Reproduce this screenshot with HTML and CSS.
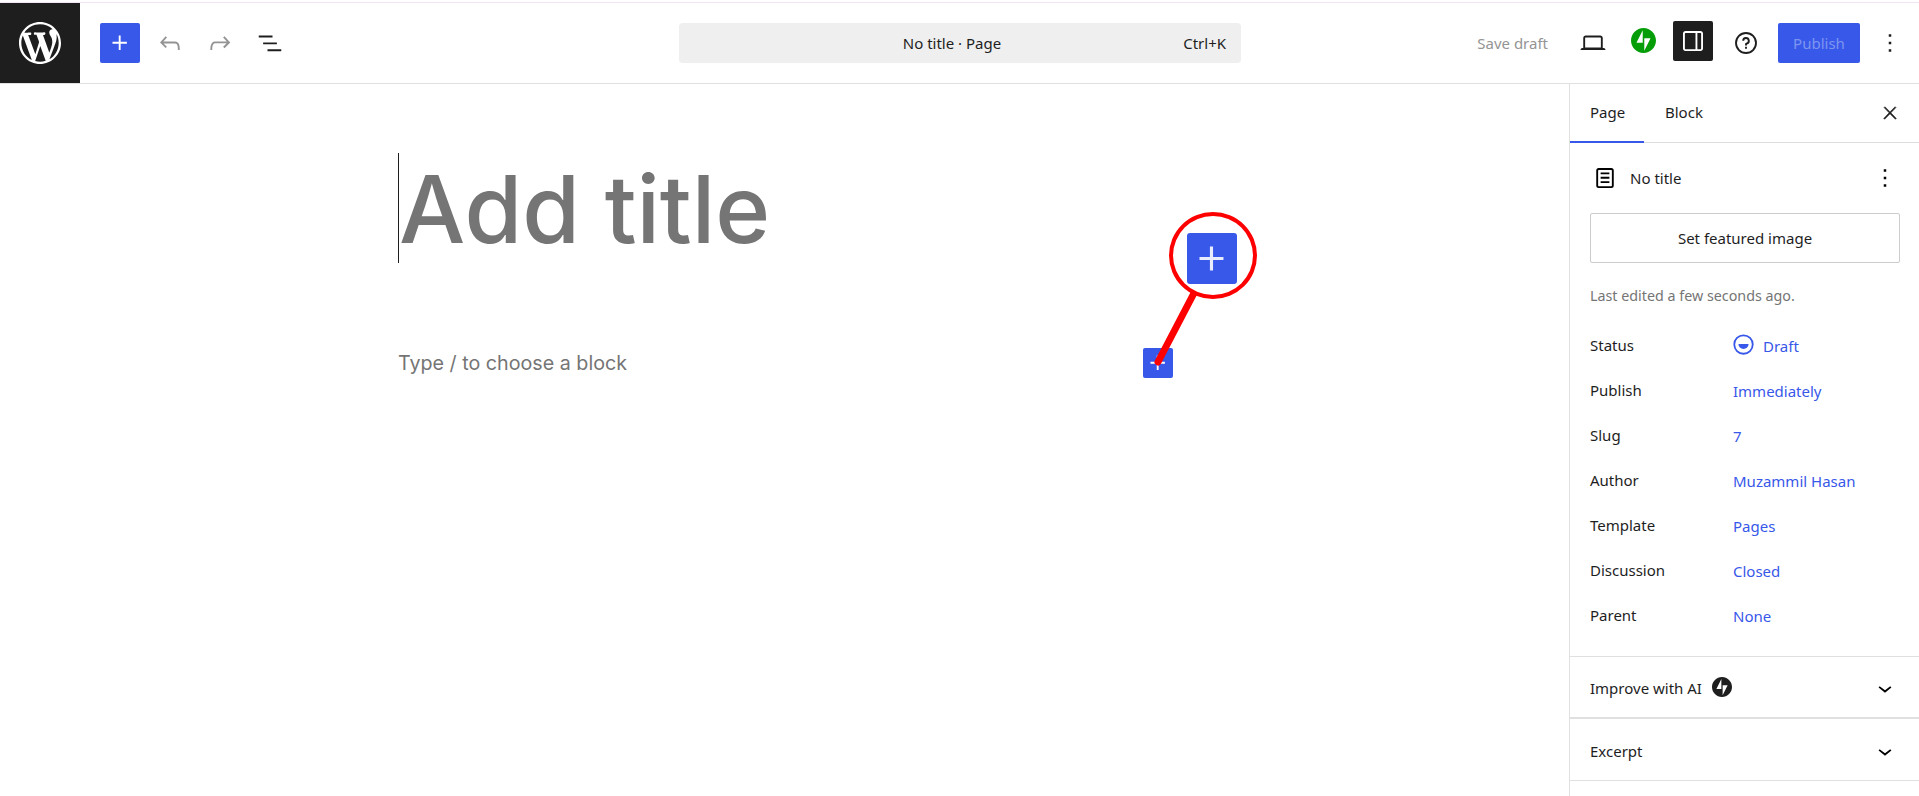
FILE: index.html
```html
<!DOCTYPE html>
<html lang="en">
<head>
    <meta charset="UTF-8">
    <title>Add New Page</title>
    <link rel="stylesheet" href="styles.css">
</head>
<body>
    <header class="topbar">
        <a class="wp-logo">
            <svg viewBox="0 0 20 20" width="42" height="42" fill="#fff"><path d="M20 10c0-5.51-4.49-10-10-10C4.48 0 0 4.49 0 10c0 5.52 4.48 10 10 10 5.51 0 10-4.48 10-10zM7.78 15.37L4.37 6.22c.55-.02 1.17-.08 1.17-.08.5-.06.44-1.13-.06-1.11 0 0-1.45.11-2.37.11-.18 0-.37 0-.58-.01C4.12 2.69 6.87 1.11 10 1.11c2.33 0 4.45.87 6.05 2.34-.68-.11-1.65.39-1.65 1.58 0 .74.45 1.36.9 2.1.35.61.55 1.36.55 2.46 0 1.49-1.4 5-1.4 5l-3.03-8.37c.54-.02.82-.17.82-.17.5-.05.44-1.25-.06-1.22 0 0-1.44.12-2.38.12-.87 0-2.33-.12-2.33-.12-.5-.03-.56 1.2-.06 1.22l.92.08 1.26 3.41zM17.41 10c.24-.64.74-1.87.43-4.25.7 1.29 1.05 2.71 1.05 4.25 0 3.29-1.73 6.24-4.4 7.78.97-2.59 1.94-5.2 2.92-7.78zM6.1 18.09C3.12 16.65 1.11 13.53 1.11 10c0-1.3.23-2.48.72-3.59C3.25 10.3 4.67 14.2 6.1 18.09zm4.03-6.63l2.58 6.98c-.86.29-1.76.45-2.71.45-.79 0-1.57-.11-2.29-.33.81-2.38 1.62-4.74 2.42-7.1z"/></svg>
        </a>
        <div class="tools-left">
            <button class="icon-btn primary">
                <svg viewBox="0 0 24 24" width="30" height="30" fill="#fff"><path d="M11 12.5V17.5H12.5V12.5H17.5V11H12.5V6H11V11H6V12.5H11Z"/></svg>
            </button>
            <button class="icon-btn muted">
                <svg viewBox="0 0 24 24" width="30" height="30"><path d="M18.3 11.7c-.6-.6-1.4-.9-2.3-.9H6.7l2.9-3.3-1.1-1-4.5 5L8.5 16l1-1-2.7-2.7H16c.5 0 .9.2 1.3.5 1 1 1 3.4 1 4.5v.3h1.5v-.2c0-1.5 0-4.3-1.5-5.7z"/></svg>
            </button>
            <button class="icon-btn muted">
                <svg viewBox="0 0 24 24" width="30" height="30"><path d="M15.6 6.5l-1.1 1 2.9 3.3H8c-.9 0-1.7.3-2.3.9-1.4 1.5-1.4 4.2-1.4 5.6v.2h1.5v-.3c0-1.1 0-3.5 1-4.5.3-.3.7-.5 1.3-.5h9.2L14.5 15l1.1 1.1 4.6-4.6-4.6-5z"/></svg>
            </button>
            <button class="icon-btn">
                <svg viewBox="0 0 24 24" width="30" height="30"><path d="M3 6h11v1.5H3V6zm3.5 5.5h11V13h-11v-1.5zM21 17H10v1.5h11V17z"/></svg>
            </button>
        </div>
        <div class="command-bar">
            <span class="command-title">No title · Page</span>
            <span class="command-key">Ctrl+K</span>
        </div>
        <div class="tools-right">
            <span class="save-draft">Save draft</span>
            <button class="icon-btn">
                <svg viewBox="0 0 24 24" width="30" height="30"><path d="M20.5 16h-.7V8c0-1.1-.9-2-2-2H6.2c-1.1 0-2 .9-2 2v8h-.7c-.8 0-1.5.7-1.5 1.5h20c0-.8-.7-1.5-1.5-1.5zM5.7 8c0-.3.2-.5.5-.5h11.6c.3 0 .5.2.5.5v7.6H5.7V8z"/></svg>
            </button>
            <button class="icon-btn jetpack">
                <svg viewBox="0 0 32 32" width="25" height="25" fill="#069e08"><path d="M16,0C7.2,0,0,7.2,0,16s7.2,16,16,16s16-7.2,16-16S24.8,0,16,0z M15,19H7l8-16V19z M17,29V13h8L17,29z"/></svg>
            </button>
            <button class="icon-btn dark">
                <svg viewBox="0 0 24 24" width="30" height="30" fill="#fff"><path d="M18 4H6c-1.1 0-2 .9-2 2v12c0 1.1.9 2 2 2h12c1.1 0 2-.9 2-2V6c0-1.1-.9-2-2-2zm-4 14.5H6c-.3 0-.5-.2-.5-.5V6c0-.3.2-.5.5-.5h8v13zm4.5-.5c0 .3-.2.5-.5.5h-2.5v-13H18c.3 0 .5.2.5.5v12z"/></svg>
            </button>
            <button class="icon-btn help">
                <svg viewBox="0 0 24 24" width="30" height="30"><path d="M12 4.75a7.25 7.25 0 100 14.5 7.25 7.25 0 000-14.5zM3.25 12a8.75 8.75 0 1117.5 0 8.75 8.75 0 01-17.5 0zM12 8.75a1.5 1.5 0 01.167 2.99c-.465.052-.917.44-.917 1.01V14h1.5v-.845A3 3 0 109 10.25h1.5a1.5 1.5 0 011.5-1.5zM11.25 15v1.5h1.5V15h-1.5z"/></svg>
            </button>
            <button class="publish">Publish</button>
            <button class="icon-btn">
                <svg viewBox="0 0 24 24" width="30" height="30"><path d="M13 19h-2v-2h2v2zm0-6h-2v-2h2v2zm0-6h-2V5h2v2z"/></svg>
            </button>
        </div>
    </header>

    <div class="workspace">
        <main class="editor">
            <div class="editor-canvas">
                <h1 class="title-placeholder">Add title</h1>
                <div class="block-row">
                    <p class="block-placeholder">Type / to choose a block</p>
                    <button class="inserter">
                        <svg viewBox="0 0 24 24" width="30" height="30" fill="#fff"><path d="M11 12.5V17.5H12.5V12.5H17.5V11H12.5V6H11V11H6V12.5H11Z"/></svg>
                    </button>
                </div>
            </div>

            <!-- callout drawn on top of the screenshot -->
            <svg class="callout-line" width="60" height="90" viewBox="0 0 60 90">
                <path d="M45 3 L10 70" stroke="#fe0000" stroke-width="7" stroke-linecap="round" fill="none"/>
            </svg>
            <div class="callout-ring">
                <div class="callout-btn">
                    <svg viewBox="0 0 24 24" width="52" height="52" fill="#e9ecfd"><path d="M11 12.5V17.5H12.5V12.5H17.5V11H12.5V6H11V11H6V12.5H11Z"/></svg>
                </div>
            </div>
        </main>

        <aside class="sidebar">
            <div class="tabs">
                <span class="tab active">Page</span>
                <span class="tab">Block</span>
                <button class="icon-btn close">
                    <svg viewBox="0 0 24 24" width="20" height="20" stroke="#1e1e1e" stroke-width=".7"><path d="M13 11.8l6.1-6.3-1-1-6.1 6.2-6.1-6.2-1 1 6.1 6.3-6.5 6.7 1 1 6.5-6.6 6.5 6.6 1-1z"/></svg>
                </button>
            </div>

            <section class="summary">
                <div class="doc-row">
                    <svg viewBox="0 0 24 24" width="30" height="30"><path fill-rule="evenodd" d="M17 4H7a2 2 0 0 0-2 2v12a2 2 0 0 0 2 2h10a2 2 0 0 0 2-2V6a2 2 0 0 0-2-2Zm0 1.5H7a.5.5 0 0 0-.5.5v12a.5.5 0 0 0 .5.5h10a.5.5 0 0 0 .5-.5V6a.5.5 0 0 0-.5-.5ZM15.5 7.5h-7V9h7V7.5Zm-7 3.5h7v1.5h-7V11Zm7 3.5h-7V16h7v-1.5Z"/></svg>
                    <span class="doc-name">No title</span>
                    <svg viewBox="0 0 24 24" width="30" height="30"><path d="M13 19h-2v-2h2v2zm0-6h-2v-2h2v2zm0-6h-2V5h2v2z"/></svg>
                </div>
                <button class="featured-btn">Set featured image</button>
                <p class="last-edited">Last edited a few seconds ago.</p>

                <div class="meta">
                    <div class="meta-row">
                        <span class="meta-label">Status</span>
                        <span class="meta-value">
                            <svg class="status-icon" viewBox="0 0 24 24" width="27" height="27" fill="#3858e9"><path fill-rule="evenodd" d="M12 3a9 9 0 1 0 0 18 9 9 0 0 0 0-18Zm0 1.6a7.4 7.4 0 1 1 0 14.8 7.4 7.4 0 0 1 0-14.8ZM7.5 11.5h9a4.5 4.5 0 0 1-9 0Z"/></svg>
                            Draft
                        </span>
                    </div>
                    <div class="meta-row"><span class="meta-label">Publish</span><span class="meta-value">Immediately</span></div>
                    <div class="meta-row"><span class="meta-label">Slug</span><span class="meta-value">7</span></div>
                    <div class="meta-row"><span class="meta-label">Author</span><span class="meta-value">Muzammil Hasan</span></div>
                    <div class="meta-row"><span class="meta-label">Template</span><span class="meta-value">Pages</span></div>
                    <div class="meta-row"><span class="meta-label">Discussion</span><span class="meta-value">Closed</span></div>
                    <div class="meta-row"><span class="meta-label">Parent</span><span class="meta-value">None</span></div>
                </div>
            </section>

            <section class="panel panel-ai">
                <span class="panel-title">Improve with AI</span>
                <svg class="panel-badge" viewBox="0 0 32 32" width="20" height="20" fill="#1e1e1e"><path d="M16,0C7.2,0,0,7.2,0,16s7.2,16,16,16s16-7.2,16-16S24.8,0,16,0z M15,19H7l8-16V19z M17,29V13h8L17,29z"/></svg>
                <svg class="chevron" viewBox="0 0 24 24" width="28" height="28"><path d="M17.5 11.6L12 16l-5.5-4.4.9-1.2L12 14l4.5-3.6 1 1.2z"/></svg>
            </section>
            <section class="panel">
                <span class="panel-title">Excerpt</span>
                <svg class="chevron" viewBox="0 0 24 24" width="28" height="28"><path d="M17.5 11.6L12 16l-5.5-4.4.9-1.2L12 14l4.5-3.6 1 1.2z"/></svg>
            </section>
        </aside>
    </div>
</body>
</html>
```

FILE: styles.css
```css
* {
    box-sizing: border-box;
}

html,
body {
    height: 100%;
}

body {
    margin: 0;
    display: flex;
    flex-direction: column;
    overflow: hidden;
    padding-top: 2px;
    font-family: "Noto Sans", "Open Sans", sans-serif;
    font-size: 15px;
    color: #1e1e1e;
    background-color: #fff;
}

button {
    font-family: inherit;
    font-size: 15px;
    border: none;
    background: none;
    padding: 0;
    color: inherit;
}

svg {
    display: block;
}

/* top bar */
.topbar {
    flex: none;
    height: 82px;
    display: flex;
    align-items: center;
    border-top: 1px solid #f3e5f5;
    border-bottom: 1px solid #e0e0e0;
}

.wp-logo {
    flex: none;
    width: 80px;
    height: 80px;
    background-color: #1e1e1e;
    display: flex;
    justify-content: center;
    align-items: center;
}

.icon-btn {
    flex: none;
    width: 40px;
    height: 40px;
    border-radius: 2px;
    display: flex;
    justify-content: center;
    align-items: center;
    fill: #1e1e1e;
}

.icon-btn.primary {
    background-color: #3858e9;
}

.icon-btn.muted {
    fill: #949494;
}

.icon-btn.dark {
    background-color: #1e1e1e;
    margin-bottom: 4px;
}

.icon-btn.jetpack svg {
    margin-bottom: 5px;
}

.icon-btn.help {
    margin-left: 3px;
}

.tools-left {
    flex: none;
    display: flex;
    align-items: center;
    gap: 10px;
    margin-left: 20px;
    width: 579px;
}

.command-bar {
    flex: none;
    width: 562px;
    height: 40px;
    padding-right: 16px;
    border-radius: 4px;
    background-color: #efefef;
    display: flex;
    align-items: center;
    position: relative;
    justify-content: center;
}

.command-key {
    position: absolute;
    right: 15px;
}

.tools-right {
    flex: 1;
    display: flex;
    align-items: center;
    justify-content: flex-end;
    padding-right: 9px;
    gap: 10px;
}

.save-draft {
    color: #949494;
    margin-right: 15px;
}

.publish {
    width: 82px;
    height: 40px;
    margin-left: 2px;
    border-radius: 2px;
    background-color: #3858e9;
    color: #7e95f0;
}

/* editor area */
.workspace {
    flex: 1;
    min-height: 0;
    display: flex;
}

.editor {
    flex: 1;
    position: relative;
}

.editor-canvas {
    width: 775px;
    margin-left: 398px;
    padding-top: 69px;
}

.title-placeholder {
    margin: 0;
    height: 110px;
    border-left: 1px solid #1e1e1e;
    font-family: Inter, sans-serif;
    font-size: 93.5px;
    font-weight: 500;
    line-height: 112px;
    letter-spacing: -0.1px;
    color: #757575;
}

.block-row {
    margin-top: 85px;
    display: flex;
    align-items: center;
    justify-content: space-between;
}

.block-placeholder {
    margin: 0;
    font-family: Inter, sans-serif;
    font-size: 19.7px;
    color: #757575;
}

.inserter {
    width: 30px;
    height: 30px;
    border-radius: 2px;
    background-color: #3858e9;
    display: flex;
    justify-content: center;
    align-items: center;
}

.callout-ring {
    position: absolute;
    left: 1169px;
    top: 128px;
    width: 88px;
    height: 87px;
    border: 4px solid #fe0000;
    border-radius: 50%;
    display: flex;
    justify-content: center;
    align-items: center;
}

.callout-btn {
    width: 50px;
    height: 51px;
    margin: 6px 2px 0 0;
    border-radius: 3px;
    background-color: #3858e9;
    display: flex;
    justify-content: center;
    align-items: center;
}

.callout-line {
    position: absolute;
    left: 1148px;
    top: 208px;
}

/* sidebar */
.sidebar {
    flex: none;
    width: 350px;
    border-left: 1px solid #e0e0e0;
    overflow: hidden;
}

.tabs {
    height: 59px;
    display: flex;
    align-items: stretch;
    border-bottom: 1px solid #ddd;
}

.tab {
    padding: 0 0 0 21px;
    line-height: 57px;
    height: 59px;
}

.tab.active {
    width: 74px;
    padding-left: 20px;
    border-bottom: 2px solid #3858e9;
}

.icon-btn.close {
    margin-left: auto;
    margin-right: 9px;
    align-self: center;
}

.summary {
    padding: 17px 19px 19px 20px;
    border-bottom: 1px solid #e0e0e0;
}

.doc-row {
    display: flex;
    align-items: center;
    gap: 10px;
    height: 36px;
}

.doc-name {
    flex: 1;
}

.featured-btn {
    display: block;
    width: 310px;
    height: 50px;
    margin-top: 17px;
    border: 1px solid #ccc;
    border-radius: 2px;
}

.last-edited {
    margin: 23px 0 0;
    height: 20px;
    line-height: 20px;
    font-size: 14.3px;
    color: #757575;
}

.meta {
    margin-top: 16px;
}

.meta-row {
    display: flex;
    align-items: center;
    height: 45px;
}

.meta-label {
    flex: none;
    width: 143px;
}

.meta-value {
    display: flex;
    align-items: center;
    gap: 6px;
    padding-top: 2px;
    color: #3858e9;
}

.status-icon {
    margin: -2px 0 0 -3px;
}

.panel {
    height: 62px;
    display: flex;
    align-items: center;
    padding: 2px 20px 0;
    border-bottom: 1px solid #e0e0e0;
}

.panel-ai {
    border-bottom-width: 2px;
}

.panel-badge {
    margin-left: 10px;
    margin-top: -2px;
}

.chevron {
    margin-left: auto;
}
```
